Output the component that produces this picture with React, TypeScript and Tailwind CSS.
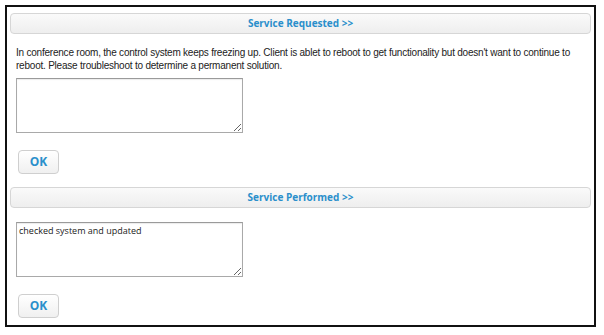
// Service ticket panel — two sections, each a header bar, a note box and an OK button.

const SECTIONS = [
  {
    title: "Service Requested >>",
    text: "In conference room, the control system keeps freezing up. Client is ablet to reboot to get functionality but doesn't want to continue to reboot. Please troubleshoot to determine a permanent solution.",
    value: "",
  },
  {
    title: "Service Performed >>",
    text: "",
    value: "checked system and updated",
  },
];

function Header({ title }: { title: string }) {
  return (
    <div className="mx-[3px] h-[21px] rounded-[4px] border border-[#d6d6d6] bg-gradient-to-b from-[#fafafa] to-[#eeeeee] flex items-center justify-center">
      <span className="text-[10px] font-bold text-[#2a8fcb]" style={{ fontFamily: '"Open Sans", "DejaVu Sans", sans-serif' }}>
        {title}
      </span>
    </div>
  );
}

export default function App() {
  return (
    <div className="w-[604px] h-[335px] bg-white pt-[5px] pl-[5px]">
      <div className="w-[591px] h-[322px] border-2 border-[#111] flex flex-col pt-[6px]">
        {SECTIONS.map((s, i) => (
          <div key={s.title} className={i === 0 ? "flex flex-col" : "flex flex-col mt-[13px]"}>
            <Header title={s.title} />
            {s.text ? (
              <p
                className="ml-[9px] mr-[10px] mt-[12px] text-[10px] leading-[13px] tracking-[-0.22px] text-[#222]"
                style={{ fontFamily: '"Liberation Sans", Arial, sans-serif' }}
              >
                {s.text}
              </p>
            ) : null}
            <textarea
              defaultValue={s.value}
              className={
                (s.text ? "mt-[6px]" : "mt-[14px]") +
                " ml-[9px] w-[227px] h-[55px] border border-[#a9a9a9] border-t-[#9a9a9a] shadow-[inset_0_1px_1px_rgba(0,0,0,0.08)] px-[2px] py-[1px] text-[9px] leading-[13px] text-[#1a1a1a] resize-y outline-none"
              }
              style={{ fontFamily: '"Open Sans", "Noto Sans", sans-serif' }}
            />
            <button
              className="ml-[11px] mt-[17px] w-[41px] h-[24px] rounded-[4px] border border-[#cfcfcf] bg-gradient-to-b from-white to-[#f0f0f0] text-[12px] font-bold text-[#2a8fcb]"
              style={{ fontFamily: '"Open Sans", "DejaVu Sans", sans-serif' }}
            >
              OK
            </button>
          </div>
        ))}
      </div>
    </div>
  );
}
